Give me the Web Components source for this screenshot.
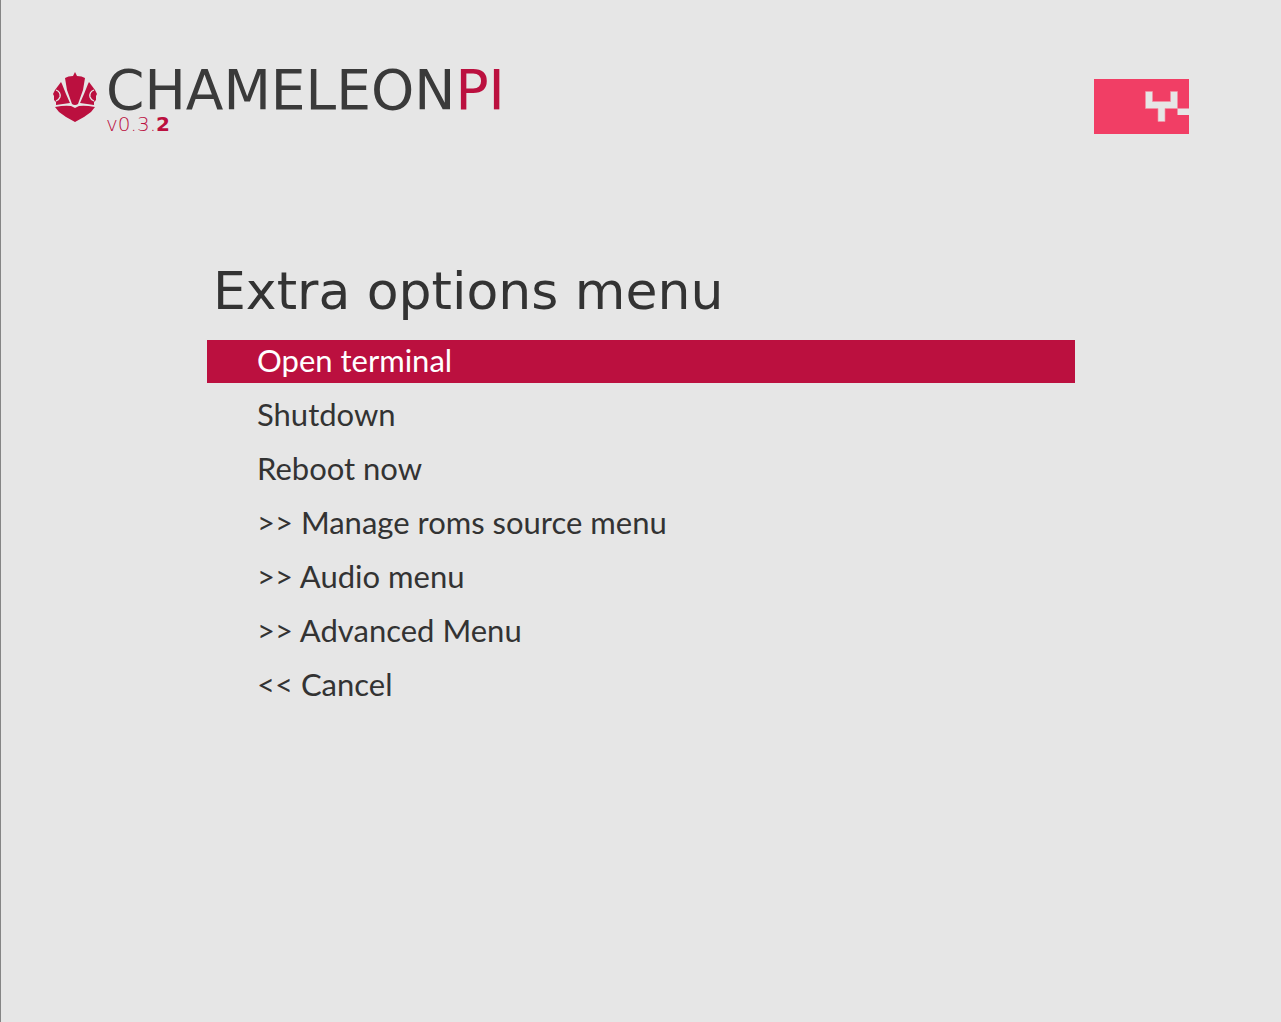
<!DOCTYPE html>
<html lang="en">
<head>
<meta charset="utf-8">
<meta name="viewport" content="width=device-width, initial-scale=1">
<title>ChameleonPi</title>
<style>
html{background:#e6e6e6}
body{margin:0;min-height:100vh;box-sizing:border-box;border-left:1px solid #858585;color:#333}
</style>
</head>
<body>
<chameleon-screen>
  <chameleon-brand slot="brand"></chameleon-brand>
  <machine-badge slot="badge"></machine-badge>
  <option-menu heading="Extra options menu">
    <option-item selected>Open terminal</option-item>
    <option-item>Shutdown</option-item>
    <option-item>Reboot now</option-item>
    <option-item>&gt;&gt; Manage roms source menu</option-item>
    <option-item>&gt;&gt; Audio menu</option-item>
    <option-item>&gt;&gt; Advanced Menu</option-item>
    <option-item>&lt;&lt; Cancel</option-item>
  </option-menu>
</chameleon-screen>
<script>
function define(name, markup, setup) {
  customElements.define(name, class extends HTMLElement {
    constructor() {
      super();
      this.attachShadow({mode: 'open'}).innerHTML = markup;
    }
    connectedCallback() { if (setup) setup(this); }
  });
}

define('chameleon-screen', `
<style>
:host{display:block}
header{display:flex;justify-content:space-between;align-items:flex-start;padding:64px 92px 0 52px}
main{padding:122px 206px 40px}
</style>
<header><slot name="brand"></slot><slot name="badge"></slot></header>
<main><slot></slot></main>`);

define('chameleon-brand', `
<style>
:host{display:flex;align-items:flex-start;gap:8px;font-family:"DejaVu Sans",sans-serif}
svg{display:block;width:45px;height:50px;margin-top:8px}
.name{font-size:55px;font-weight:400;line-height:52px;color:#3a3a3a}
.pi,.version{color:#bb103f}
.version{font-size:20px;font-weight:200;line-height:16px}
b{font-weight:700}
</style>
<svg viewBox="0 0 45 50" aria-hidden="true">
  <g fill="#bb103f">
    <path d="M22 0 24 4Q29 4 32 6L30 18 25 32Q22 34 19 32L14 18 12 6Q15 4 20 4Z"/>
    <path d="M8 10 9 12 13 22 17 31 3 33 3 30 1 28V24L0 22 2 18Z"/>
    <path d="M36 10 35 12 31 22 27 31 41 33V30L43 28V24L44 22 42 18Z"/>
    <path d="M2 35Q12 33 18 34L22 36 26 34Q32 33 42 35L38 40 31 45 22 50 13 45 6 40Z"/>
  </g>
  <g fill="none" stroke="#e6e6e6" stroke-width="1.3">
    <path d="M3 18Q8 20 7 25Q6 28 3 29M41 18Q36 20 37 25Q38 28 41 29"/>
  </g>
</svg>
<div>
  <div class="name">CHAMELEON<span class="pi">PI</span></div>
  <div class="version">v0.3.<b>2</b></div>
</div>`);

define('machine-badge', `
<style>
:host{display:block;margin-top:15px}
svg{display:block;width:95px;height:55px}
</style>
<svg viewBox="0 0 95 55" aria-hidden="true">
  <path fill="#f13e65" d="M0 0H95V55H0Z"/>
  <path fill="#e6e6e6" stroke="#f390a5" stroke-width=".7" d="M51.5 12.5H58.5V22.5H76.5V12.5H83.5V29.5H71V42.5H64V29.5H51.5Z"/>
  <path fill="#e6e6e6" d="M83.5 29.5H95V36H83.5Z"/>
</svg>`);

define('option-menu', `
<style>
:host{display:block}
h1{margin:0 6px 14px;font:400 52px/70px "DejaVu Sans",sans-serif;color:#333}
nav{display:flex;flex-direction:column;gap:11px}
</style>
<h1></h1>
<nav><slot></slot></nav>`, el => {
  el.shadowRoot.querySelector('h1').textContent = el.getAttribute('heading');
});

define('option-item', `
<style>
:host{display:block}
button{display:block;width:100%;height:43px;margin:0;border:0;padding:0 50px 2px;background:transparent;color:#333;font:400 31px/41px Lato,sans-serif;text-align:left;cursor:pointer}
:host([selected]) button{background:#bb103f;color:#fff}
</style>
<button type="button"><slot></slot></button>`);
</script>
</body>
</html>
